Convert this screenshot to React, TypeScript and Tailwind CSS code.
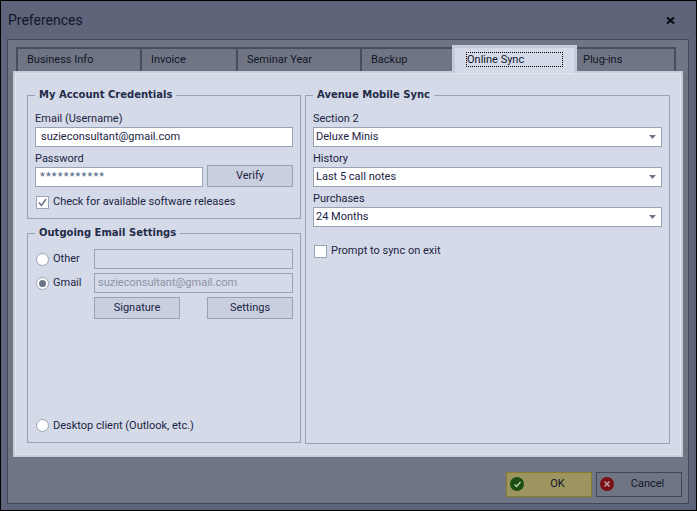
import React from 'react';

const font = "[font-family:'Roboto','Liberation_Sans',sans-serif]";
const ink = 'text-[#1c2444]';

const tabs = [
  { label: 'Business Info', width: 'w-[124px]' },
  { label: 'Invoice', width: 'w-[96px]' },
  { label: 'Seminar Year', width: 'w-[124px]' },
  { label: 'Backup', width: 'w-[92px]' },
];

const Group: React.FC<{ title: string; className: string; children: React.ReactNode }> = ({ title, className, children }) => (
  <fieldset className={`border border-[#9aa2b5] px-[7px] ${className}`}>
    <legend className="px-[4px] h-[13px] leading-[11px] text-[10px] font-bold text-[#232b49] [font-family:'DejaVu_Sans',sans-serif]">
      {title}
    </legend>
    {children}
  </fieldset>
);

const Field: React.FC<{ label: string; children: React.ReactNode }> = ({ label, children }) => (
  <div className="flex flex-col">
    <div className="h-[20px] leading-[24px] text-[11px]">{label}</div>
    {children}
  </div>
);

const TextBox: React.FC<{ value: string; className?: string }> = ({ value, className = 'bg-white px-[5px]' }) => (
  <div className={`h-[20px] border border-[#9aa2b5] leading-[17px] text-[11px] ${className}`}>{value}</div>
);

const Select: React.FC<{ value: string }> = ({ value }) => (
  <div className="h-[20px] bg-white border border-[#9aa2b5] pl-[2px] pr-[5px] flex items-center justify-between text-[11px]">
    <span>{value}</span>
    <svg width="7" height="4" viewBox="0 0 7 4" className="fill-[#6d7488]">
      <path d="M0 0h7L3.5 4z" />
    </svg>
  </div>
);

const SoftButton: React.FC<{ label: string }> = ({ label }) => (
  <div className="w-[86px] h-[22px] bg-[#c9cfdf] border border-[#9aa2b5] flex items-center justify-center text-[11px]">
    {label}
  </div>
);

const Radio: React.FC<{ label: string; checked?: boolean }> = ({ label, checked }) => (
  <div className="flex items-center gap-[4px] text-[11px]">
    <span className="w-[13px] h-[13px] rounded-full bg-white border border-[#9aa2b5] flex items-center justify-center">
      {checked && <span className="w-[7px] h-[7px] rounded-full bg-[#6b7389]" />}
    </span>
    {label}
  </div>
);

const CheckRow: React.FC<{ label: string; checked?: boolean }> = ({ label, checked }) => (
  <div className="flex items-center gap-[4px] text-[11px]">
    <span className="w-[13px] h-[13px] bg-white border border-[#9aa2b5] flex items-center justify-center">
      {checked && (
        <svg width="9" height="9" viewBox="0 0 9 9" fill="none" stroke="#6b7389" strokeWidth="1.5">
          <path d="M1 4.5 3.5 7.5 8 1" />
        </svg>
      )}
    </span>
    {label}
  </div>
);

const App: React.FC = () => {
  return (
    <div className={`w-[697px] h-[511px] bg-[#5e6479] border border-black flex flex-col ${font} ${ink}`}>
      <div className="h-[38px] flex items-center justify-between pl-[7px] pr-[21px]">
        <span className="text-[14px] text-[#12172b]">Preferences</span>
        <svg width="9" height="9" viewBox="0 0 9 9" stroke="#0b0d16" strokeWidth="2.2">
          <path d="M1 1.5 8 7.5M8 1.5 1 7.5" />
        </svg>
      </div>

      <div className="ml-[6px] mr-[7px] mb-[6px] flex-1 border border-[#3f4759] bg-[#6f7583] pt-[7px] pl-[5px] pr-[4px] flex flex-col">
        <div className="h-[24px] pl-[3px] flex items-end">
          {tabs.map((tab) => (
            <div
              key={tab.label}
              className={`${tab.width} h-[24px] border-t-2 border-l-2 border-[#454d60] pl-[9px] leading-[22px] text-[11px] text-[#12172b]`}
            >
              {tab.label}
            </div>
          ))}
          <div className="w-[125px] h-[28px] -mb-[2px] relative z-10 bg-[#d4dae8] border-[3px] border-b-0 border-[#c5cbd9] px-[11px] pt-[4px]">
            <div className="h-[15px] border border-dotted border-black leading-[13px] text-[11px] text-[#12172b]">Online Sync</div>
          </div>
          <div className="w-[99px] h-[24px] border-t-2 border-r-2 border-[#454d60] pl-[6px] leading-[22px] text-[11px] text-[#12172b]">
            Plug-ins
          </div>
        </div>

        <div className="w-[670px] h-[386px] bg-[#c5cbd9] p-[2px]">
          <div className="h-full bg-[#d4dae8] border border-[#e4e7f0] pt-[15px] pl-[11px] pr-[9px] flex gap-[4px]">
            <div className="w-[274px] flex flex-col gap-[8px]">
              <Group title="My Account Credentials" className="h-[130px]">
                <div className="pt-[5px]">
                  <Field label="Email (Username)">
                    <TextBox value="suzieconsultant@gmail.com" />
                  </Field>
                  <Field label="Password">
                    <div className="flex gap-[4px] items-end -mt-[2px]">
                      <TextBox value="***********" className="w-[168px] bg-white px-[4px] text-[#4a6288] tracking-[1.2px]" />
                      <SoftButton label="Verify" />
                    </div>
                  </Field>
                  <div className="mt-[7px] pl-[1px]">
                    <CheckRow label="Check for available software releases" checked />
                  </div>
                </div>
              </Group>

              <Group title="Outgoing Email Settings" className="h-[216px]">
                <div className="h-[196px] pt-[9px] flex flex-col">
                  <div className="flex flex-col gap-[4px]">
                    <div className="flex items-center">
                      <div className="w-[59px] pl-[1px]"><Radio label="Other" /></div>
                      <TextBox value="" className="flex-1" />
                    </div>
                    <div className="flex items-center">
                      <div className="w-[59px] pl-[1px]"><Radio label="Gmail" checked /></div>
                      <TextBox value="suzieconsultant@gmail.com" className="flex-1 text-[#8c93a6] px-[3px]" />
                    </div>
                    <div className="flex justify-between pl-[59px]">
                      <SoftButton label="Signature" />
                      <SoftButton label="Settings" />
                    </div>
                  </div>
                  <div className="mt-auto mb-[2px] pl-[1px]">
                    <Radio label="Desktop client (Outlook, etc.)" />
                  </div>
                </div>
              </Group>
            </div>

            <Group title="Avenue Mobile Sync" className="w-[365px] h-[355px]">
              <div className="pt-[5px]">
                <Field label="Section 2"><Select value="Deluxe Minis" /></Field>
                <Field label="History"><Select value="Last 5 call notes" /></Field>
                <Field label="Purchases"><Select value="24 Months" /></Field>
                <div className="mt-[16px] pl-[1px]">
                  <CheckRow label="Prompt to sync on exit" />
                </div>
              </div>
            </Group>
          </div>
        </div>

        <div className="flex-1 flex justify-end items-center gap-[4px] pr-[2px] pt-[8px]">
          <div className="w-[86px] h-[25px] bg-[#9c9560] border border-[#8a7a2c] flex items-center pl-[3px] text-[11px] text-[#12172b]">
            <span className="w-[14px] h-[14px] rounded-full bg-[#1c4d12] flex items-center justify-center">
              <svg width="9" height="9" viewBox="0 0 9 9" fill="none" stroke="#b9cfa0" strokeWidth="1.5">
                <path d="M1.5 4.5 3.5 6.5 7.5 2" />
              </svg>
            </span>
            <span className="flex-1 text-center">OK</span>
          </div>
          <div className="w-[86px] h-[25px] bg-[#6f7583] border border-[#3f4759] flex items-center pl-[3px] text-[11px] text-[#12172b]">
            <span className="w-[14px] h-[14px] rounded-full bg-[#7a0f17] flex items-center justify-center">
              <svg width="8" height="8" viewBox="0 0 8 8" fill="none" stroke="#c9a0a0" strokeWidth="1.5">
                <path d="M1.5 1.5 6.5 6.5M6.5 1.5 1.5 6.5" />
              </svg>
            </span>
            <span className="flex-1 text-center">Cancel</span>
          </div>
        </div>
      </div>
    </div>
  );
};

export default App;
